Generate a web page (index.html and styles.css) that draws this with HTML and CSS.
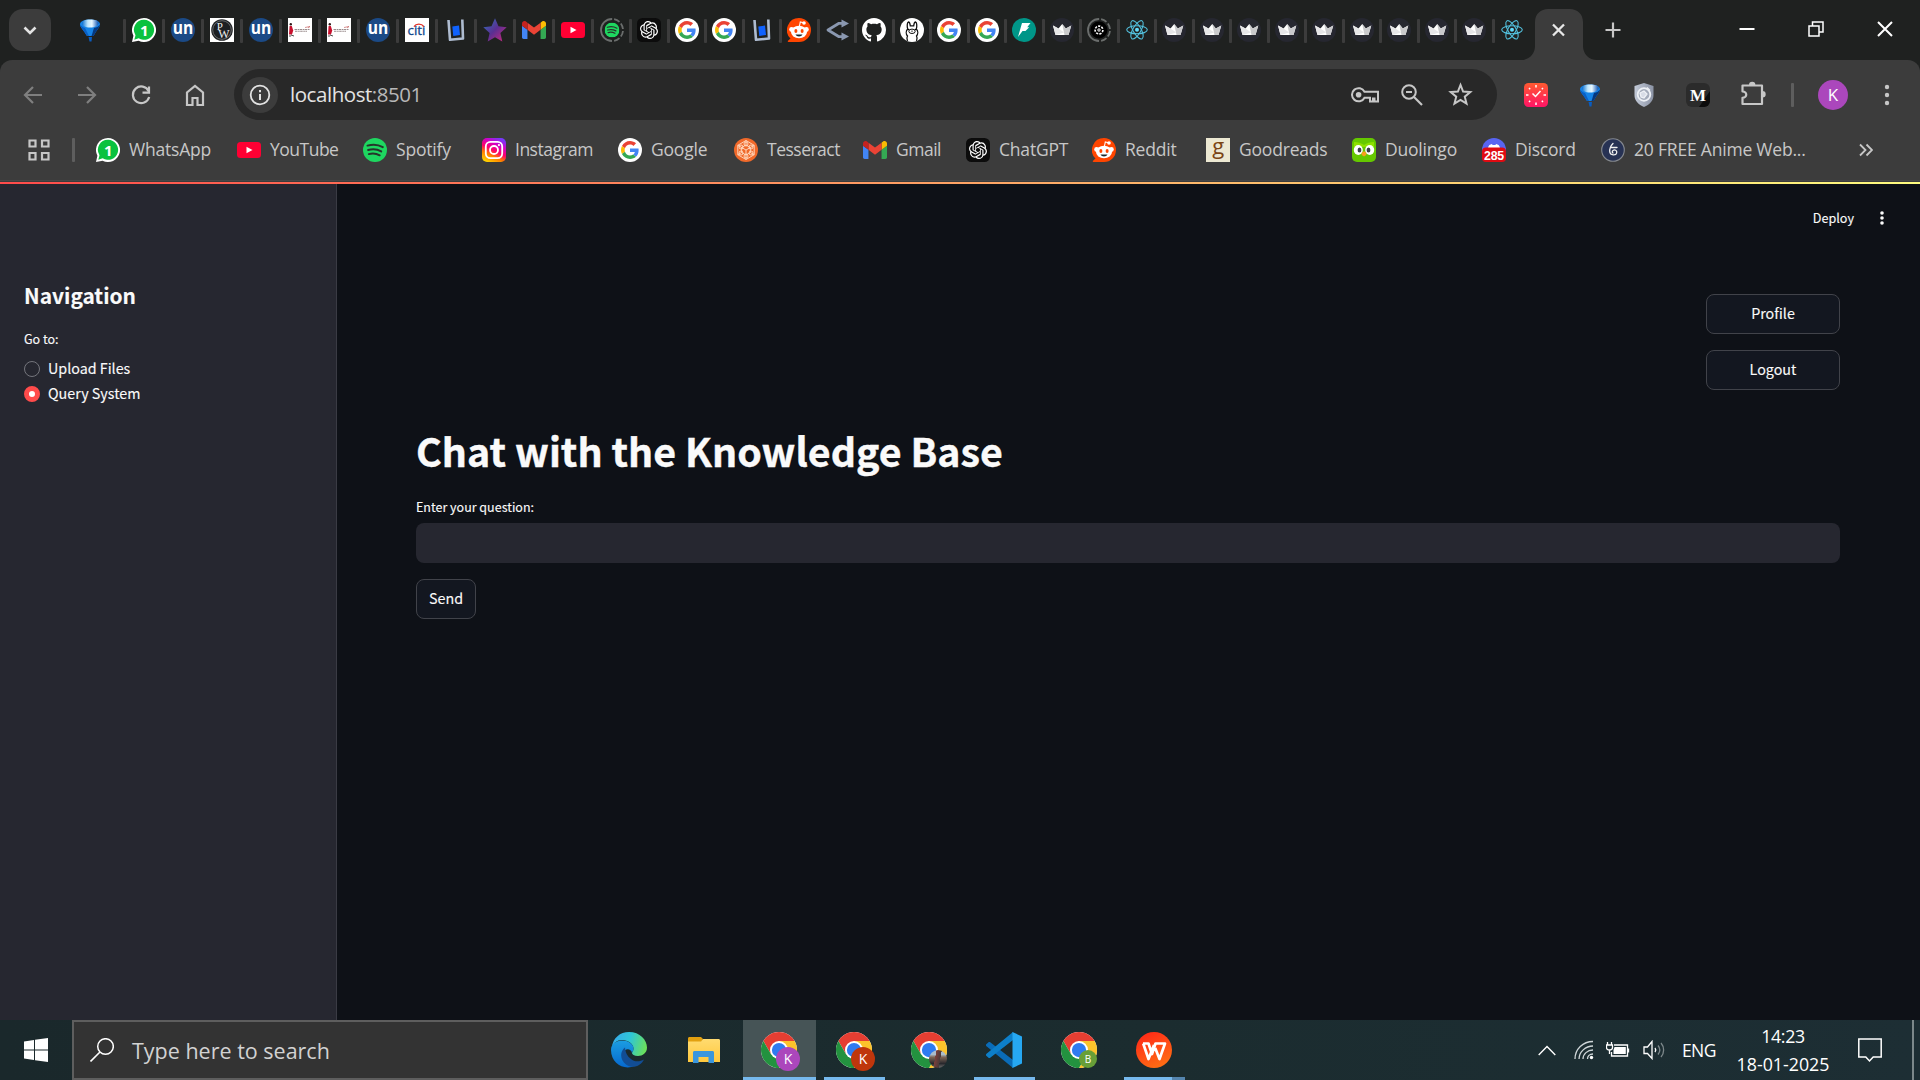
FILE: index.html
```html
<!DOCTYPE html>
<html lang="en">
<head>
<meta charset="utf-8">
<title>Chat with the Knowledge Base</title>
<link rel="stylesheet" href="styles.css">
</head>
<body>
<svg class="gradients" aria-hidden="true">
  <defs>
    <linearGradient id="gBalloon" x1="0" x2="1"><stop offset="0" stop-color="#0d6fd0"/><stop offset=".35" stop-color="#bfe6fb"/><stop offset=".6" stop-color="#e8f7ff"/><stop offset="1" stop-color="#0a50b0"/></linearGradient>
    <linearGradient id="gStar" x1="0" y1="0" x2="1" y2="1"><stop offset=".15" stop-color="#3b5fb0"/><stop offset=".5" stop-color="#5a2f92"/><stop offset="1" stop-color="#d0287c"/></linearGradient>
    <linearGradient id="gInsta" x1=".2" y1="1" x2=".7" y2="0"><stop offset="0" stop-color="#ffd600"/><stop offset=".3" stop-color="#ff7a00"/><stop offset=".5" stop-color="#ff0169"/><stop offset=".75" stop-color="#d300c5"/><stop offset="1" stop-color="#7638fa"/></linearGradient>
    <linearGradient id="gClock" x1="0" y1="0" x2="0" y2="1"><stop offset="0" stop-color="#ff5a30"/><stop offset="1" stop-color="#ff1466"/></linearGradient>
    <linearGradient id="gShield" x1="0" x2="1"><stop offset="0" stop-color="#c3cad8"/><stop offset="1" stop-color="#8b93a5"/></linearGradient>
    <linearGradient id="gEdgeTop" x1="0" y1=".3" x2="1" y2=".5"><stop offset="0" stop-color="#35a9ea"/><stop offset=".5" stop-color="#2fc6d6"/><stop offset="1" stop-color="#6be05a"/></linearGradient>
    <linearGradient id="gEdgeMid" x1="0" y1="0" x2="0" y2="1"><stop offset="0" stop-color="#1b9de2"/><stop offset="1" stop-color="#0669cf"/></linearGradient>
    <linearGradient id="gWps" x1="0" y1="0" x2=".5" y2="1"><stop offset="0" stop-color="#ff2218"/><stop offset="1" stop-color="#ff6a14"/></linearGradient>
    <linearGradient id="gFolder" x1="0" y1="0" x2="0" y2="1"><stop offset="0" stop-color="#ffdb70"/><stop offset="1" stop-color="#ffc83d"/></linearGradient>
  </defs>
</svg>
<svg class="symbols" aria-hidden="true">
  <symbol id="balloon" viewBox="0 0 24 24"><path d="M12 1.500C6.500 1.500 2 3.200 2 6.500c0 2.500 3.500 5.500 7 11.500h6.500C18.500 12 22 9 22 6.500c0-3.300-4.500-5-10-5z" fill="#1583e6"/><path d="M12 1.500C7 1.500 4 3 4 5.500c0 2 3 4 8 4s8.500-2 8.500-4.500-3.500-3.500-8.500-3.500z" fill="url(#gBalloon)"/><path d="M2 6.500c1.500 2 3 3 5 3.500 1.500 3 2.500 5 4 8H9C5.500 12 2 9 2 6.500z" fill="#0a5fc4"/><path d="M22 6.500c-1.500 2-3.500 3.200-6 3.500-1 3-1.500 5-2.500 8h2C18.500 12 22 9 22 6.500z" fill="#06387f"/><path d="M10.500 19h3.500l-.5 4.500h-2z" fill="#0a5cc0"/></symbol>
  <symbol id="whatsapp" viewBox="0 0 24 24"><path d="M12 0a12 12 0 1 1-5.400 22.700L0 24l1.400-6.300A12 12 0 0 1 12 0z" fill="#fff"/><path d="M12.300 1.800a10 10 0 1 1-5.600 18.400l-4.400 1.600 1.200-4.600A10 10 0 0 1 12.300 1.800z" fill="#0ac23f"/><text x="12.300" y="17.500" class="glyph bold" font-size="15" fill="#fff">1</text></symbol>
  <symbol id="un" viewBox="0 0 24 24"><circle cx="12" cy="12" r="12" fill="#1b4a86"/><text x="12" y="16" class="glyph bold" font-size="17" textLength="20.500" lengthAdjust="spacingAndGlyphs" fill="#fff">un</text></symbol>
  <symbol id="pw" viewBox="0 0 24 24"><path fill="#fff" d="M0 0h24v24H0z"/><circle cx="12" cy="12" r="10.800" fill="#1c1f22"/><circle cx="12" cy="12" r="9.300" fill="none" stroke="#999" stroke-width=".6"/><text x="9.800" y="11.500" class="serif" font-size="11" fill="#eee">P</text><text x="14" y="20" class="serif" font-size="12" fill="#eee">W</text></symbol>
  <symbol id="book-lady" viewBox="0 0 24 24"><path fill="#fff" d="M0 0h24v24H0z"/><circle cx="2.800" cy="6.200" r="1.200" fill="#301818"/><path d="M1.600 8h2.200l1.400 4.500-1.200 4H1z" fill="#c8102e"/><path d="M3 17l3 1M2 17v2" stroke="#222" stroke-width=".8"/><path d="M6.500 11.500h15M7 13.300h12" stroke="#9a8c8d" stroke-width="1.100" stroke-dasharray="2.500 .6 1.600 .5"/><path d="M17 9.500l5-1-2 1.500" stroke="#b44" fill="none" stroke-width=".6"/></symbol>
  <symbol id="citi" viewBox="0 0 24 24"><path fill="#fff" d="M0 0h24v24H0z"/><text x="11.500" y="16.500" class="glyph" font-size="13" textLength="18" lengthAdjust="spacingAndGlyphs" fill="#12488c" stroke="#12488c" stroke-width=".3">citi</text><path d="M9 8.600c2-3.200 7.500-3.200 10 0" fill="none" stroke="#e0342c" stroke-width="1.300"/></symbol>
  <symbol id="ubook" viewBox="0 0 24 24"><path d="M4.500 2L6 21.800 19 20.500 18.300 1.500" fill="none" stroke="#aebcd0" stroke-width="2.600" stroke-linejoin="round"/><path d="M8.300 8.500l6.700-1 1 9.500-6.700 1z" fill="#0f62fe"/></symbol>
  <symbol id="star-fav" viewBox="0 0 24 24"><path d="M12 .3l3.500 8 8.200 1-6.300 5.600 1.900 8.600-7.300-4.300-7.300 4.300 1.900-8.600L.3 9.300l8.200-1z" fill="url(#gStar)"/></symbol>
  <symbol id="gmail" viewBox="52 38 88 74"><path fill="#4285f4" d="M58 108h14V74L52 59v43c0 3.320 2.690 6 6 6"/><path fill="#34a853" d="M120 108h14c3.320 0 6-2.690 6-6V59l-20 15"/><path fill="#fbbc04" d="M120 48v26l20-15v-8c0-7.420-8.470-11.650-14.400-7.200"/><path fill="#ea4335" d="M72 74V48l24 18 24-18v26L96 92"/><path fill="#c5221f" d="M52 51v8l20 15V48l-5.600-4.200c-5.940-4.450-14.400-.22-14.400 7.200"/></symbol>
  <symbol id="youtube" viewBox="0 0 24 24"><rect y="4" width="24" height="16" rx="3.500" fill="#ff0033"/><path d="M9.500 8.700v6.600l6-3.300z" fill="#fff"/></symbol>
  <symbol id="spot" viewBox="0 0 24 24"><circle cx="12" cy="12" r="12" fill="#1ed760"/><path d="M4.500 7.600c5-1.500 11-1 15.300 1.500M5.100 12c4.600-1.300 9.300-.8 13.100 1.400M5.800 16.100c3.900-1 7.600-.6 10.900 1.200" fill="none" stroke="#26352b" stroke-width="2" stroke-linecap="round"/></symbol>
  <symbol id="spot-sleep" viewBox="0 0 24 24"><circle cx="12" cy="12" r="11" fill="none" stroke="#6b6e6d" stroke-width="1.800" stroke-dasharray="34.500 2 6 2 6 2 6 2 6 2.500" transform="rotate(90 12 12)"/><svg x="4.500" y="4.500" width="15" height="15"><use href="#spot"/></svg></symbol>
  <symbol id="gpt-mark" viewBox="0 0 24 24"><path d="M22.282 9.821a5.985 5.985 0 0 0-.516-4.910 6.046 6.046 0 0 0-6.510-2.900A6.065 6.065 0 0 0 4.981 4.182a5.985 5.985 0 0 0-3.998 2.900 6.046 6.046 0 0 0 .743 7.097 5.980 5.980 0 0 0 .511 4.911 6.051 6.051 0 0 0 6.515 2.900A5.985 5.985 0 0 0 13.260 24a6.056 6.056 0 0 0 5.772-4.206 5.989 5.989 0 0 0 3.998-2.900 6.056 6.056 0 0 0-.748-7.073zm-9.022 12.608a4.476 4.476 0 0 1-2.876-1.041l.142-.080 4.778-2.758a.795.795 0 0 0 .393-.681v-6.737l2.020 1.169a.071.071 0 0 1 .038.052v5.583a4.504 4.504 0 0 1-4.495 4.494zm-9.661-4.125a4.471 4.471 0 0 1-.535-3.014l.142.085 4.783 2.758a.771.771 0 0 0 .781 0l5.843-3.369v2.332a.080.080 0 0 1-.033.062L9.740 19.950a4.499 4.499 0 0 1-6.141-1.646zM2.341 7.896a4.485 4.485 0 0 1 2.366-1.973V11.600a.766.766 0 0 0 .388.677l5.814 3.354-2.020 1.169a.076.076 0 0 1-.071 0l-4.830-2.787A4.504 4.504 0 0 1 2.341 7.872zm16.596 3.856L13.104 8.364 15.119 7.200a.076.076 0 0 1 .071 0l4.830 2.791a4.494 4.494 0 0 1-.677 8.104v-5.677a.790.790 0 0 0-.407-.667zm2.011-3.023l-.142-.085-4.774-2.782a.776.776 0 0 0-.785 0L9.409 9.230V6.897a.066.066 0 0 1 .028-.062l4.830-2.787a4.499 4.499 0 0 1 6.680 4.660zM8.307 12.863l-2.020-1.164a.080.080 0 0 1-.038-.057V6.074a4.499 4.499 0 0 1 7.376-3.454l-.142.081L8.704 5.459a.795.795 0 0 0-.393.681zm1.098-2.365l2.602-1.500 2.607 1.500v2.999l-2.597 1.500-2.607-1.500z" fill="#fff"/></symbol>
  <symbol id="gpt" viewBox="0 0 24 24"><rect width="24" height="24" rx="5.500" fill="#0c0c0c"/><svg x="3" y="3" width="18" height="18"><use href="#gpt-mark"/></svg></symbol>
  <symbol id="gpt-sleep" viewBox="0 0 24 24"><circle cx="12" cy="12" r="11" fill="none" stroke="#6b6e6d" stroke-width="1.800" stroke-dasharray="34.500 2 6 2 6 2 6 2 6 2.500" transform="rotate(90 12 12)"/><circle cx="12" cy="12" r="8.500" fill="#000"/><circle cx="12" cy="12" r="3.900" fill="none" stroke="#fff" stroke-width="1.600" stroke-dasharray="2.200 1.200"/><circle cx="12" cy="12" r="1.200" fill="none" stroke="#fff" stroke-width="1"/></symbol>
  <symbol id="google" viewBox="0 0 24 24"><circle cx="12" cy="12" r="12" fill="#fff"/><svg x="3" y="3" width="18" height="18" viewBox="0 0 48 48"><path fill="#ea4335" d="M24 9.500c3.540 0 6.710 1.220 9.210 3.600l6.850-6.850C35.900 2.380 30.470 0 24 0 14.620 0 6.510 5.380 2.560 13.220l7.980 6.190C12.430 13.720 17.740 9.500 24 9.500z"/><path fill="#4285f4" d="M46.980 24.550c0-1.570-.15-3.090-.38-4.550H24v9.020h12.940c-.58 2.960-2.260 5.480-4.780 7.180l7.730 6c4.510-4.180 7.090-10.360 7.090-17.650z"/><path fill="#fbbc05" d="M10.530 28.590c-.48-1.450-.76-2.990-.76-4.590s.27-3.140.76-4.590l-7.980-6.190C.92 16.460 0 20.120 0 24c0 3.880.92 7.540 2.560 10.780l7.970-6.190z"/><path fill="#34a853" d="M24 48c6.480 0 11.930-2.130 15.890-5.810l-7.730-6c-2.150 1.450-4.920 2.300-8.160 2.300-6.260 0-11.570-4.220-13.470-9.910l-7.980 6.190C6.510 42.620 14.620 48 24 48z"/></svg></symbol>
  <symbol id="reddit" viewBox="0 0 24 24"><path d="M12 0a12 12 0 1 1 0 24H1.500c-.8 0-1-.8-.5-1.300l2.500-2.200A12 12 0 0 1 12 0z" fill="#ff4500"/><path d="M12.500 8l.8-4 3.200.8" fill="none" stroke="#fff" stroke-width="1.100"/><circle cx="17" cy="5" r="1.800" fill="#fff"/><circle cx="4.600" cy="11.500" r="2.400" fill="#fff"/><circle cx="19.400" cy="11.500" r="2.400" fill="#fff"/><ellipse cx="12" cy="14" rx="8" ry="6.200" fill="#fff"/><ellipse cx="8.900" cy="13" rx="1.500" ry="1.900" fill="#ff4500"/><ellipse cx="15.100" cy="13" rx="1.500" ry="1.900" fill="#ff4500"/><path d="M8.500 16.500h7c-1 2.600-6 2.600-7 0z" fill="#1c2a30"/></symbol>
  <symbol id="fork" viewBox="0 0 24 24"><path d="M18 5.300h-4L3 12l11 6.700h4" fill="none" stroke="#8a98b0" stroke-width="2.800" stroke-linejoin="round"/><path d="M16.500 1.500L24 5.500l-7.500 4zM16.500 14.500l7.500 4-7.500 4z" fill="#8a98b0"/></symbol>
  <symbol id="github" viewBox="0 0 16 16"><path fill="#fff" d="M8 0C3.580 0 0 3.580 0 8c0 3.540 2.290 6.530 5.470 7.590.4.070.55-.17.55-.38 0-.19-.01-.82-.01-1.490-2.010.37-2.530-.49-2.690-.94-.09-.23-.48-.94-.82-1.130-.28-.15-.68-.52-.01-.53.63-.01 1.080.58 1.230.82.72 1.210 1.870.87 2.330.66.070-.52.28-.87.51-1.070-1.780-.2-3.640-.89-3.640-3.950 0-.87.31-1.590.82-2.150-.08-.2-.36-1.020.08-2.120 0 0 .67-.21 2.200.82.64-.18 1.320-.27 2-.27s1.360.09 2 .27c1.530-1.040 2.200-.82 2.200-.82.44 1.100.16 1.920.08 2.120.51.56.82 1.270.82 2.150 0 3.070-1.870 3.750-3.650 3.950.29.25.54.73.54 1.480 0 1.070-.01 1.930-.01 2.200 0 .21.15.46.55.38A8.010 8.010 0 0 0 16 8c0-4.420-3.580-8-8-8z"/></symbol>
  <symbol id="llama" viewBox="0 0 24 24"><circle cx="12" cy="12" r="12" fill="#fff"/><path d="M7.500 23c-1-2-.9-3.500 0-5-1.700-2-1.700-5 .2-7-.8-2.500-.6-6.500.6-7 1.300 0 1.800 2 2 3.800h3.400c.2-1.800.7-3.800 2-3.800 1.200.5 1.400 4.500.6 7 1.900 2 1.900 5 .2 7 .9 1.500 1 3 0 5" fill="none" stroke="#111" stroke-width="1.300"/><ellipse cx="12" cy="13.300" rx="3.200" ry="2.200" fill="none" stroke="#111"/><circle cx="8.600" cy="11.500" r=".8"/><circle cx="15.400" cy="11.500" r=".8"/><path d="M11 12.800l1 .7 1-.7" fill="none" stroke="#111" stroke-width=".7"/></symbol>
  <symbol id="bolt" viewBox="0 0 24 24"><circle cx="12" cy="12" r="12" fill="#009688"/><path d="M10 5h8.500l-3.300 4.300h2L13.500 13h-3L6 19z" fill="#fff"/></symbol>
  <symbol id="crown" viewBox="0 0 24 24"><circle cx="12" cy="12" r="12" fill="#262730"/><path d="M3 7.500l5.500 3L12.200 6l3.600 4.500 5.500-3L18.500 17h-13z" fill="#fff"/><path d="M12.200 6l3.600 4.500 5.500-3L18.500 17h-4z" fill="#c9c9cc"/><path d="M3 7.500l5.500 3 5.700 4L5.500 17z" fill="#e6e6e8"/></symbol>
  <symbol id="react" viewBox="0 0 24 24"><g fill="none" stroke="#53c1de" stroke-width="1.100"><ellipse cx="12" cy="11.800" rx="10.300" ry="4"/><ellipse cx="12" cy="11.800" rx="10.300" ry="4" transform="rotate(60 12 11.800)"/><ellipse cx="12" cy="11.800" rx="10.300" ry="4" transform="rotate(120 12 11.800)"/></g><circle cx="12" cy="11.800" r="2" fill="#61dafb"/></symbol>
  <symbol id="insta" viewBox="0 0 24 24"><rect width="24" height="24" rx="5" fill="url(#gInsta)"/><rect x="3.800" y="3.800" width="16.400" height="16.400" rx="4.600" fill="none" stroke="#fff" stroke-width="1.800"/><circle cx="12" cy="12" r="4" fill="none" stroke="#fff" stroke-width="1.800"/><circle cx="16.900" cy="7.100" r="1.100" fill="#fff"/></symbol>
  <symbol id="tess" viewBox="0 0 24 24"><circle cx="12" cy="12" r="12" fill="#f0692a"/><g fill="none" stroke="#ffe0c8" stroke-width=".9"><path d="M12 2.500l8.200 4.800v9.400L12 21.500l-8.200-4.800V7.300z"/><path d="M12 7l4.300 2.500v5L12 17l-4.300-2.500v-5z"/><path d="M12 2.500V7M20.200 7.300l-3.900 2.200M20.200 16.700l-3.900-2.200M12 21.500V17M3.800 16.700l3.900-2.200M3.800 7.300l3.900 2.200M7.700 9.500L12 12l4.300-2.500M12 12v5"/><circle cx="12" cy="6" r="2"/><circle cx="17" cy="9" r="2"/><circle cx="17" cy="15" r="2"/><circle cx="12" cy="18" r="2"/><circle cx="7" cy="15" r="2"/><circle cx="7" cy="9" r="2"/></g></symbol>
  <symbol id="goodreads" viewBox="0 0 24 24"><path fill="#ece8d2" d="M0 0h24v24H0z"/><text x="12" y="15.500" class="glyph" font-size="22" fill="#7a4415">g</text></symbol>
  <symbol id="duo" viewBox="0 0 24 24"><rect width="24" height="24" rx="5" fill="#65c800"/><path d="M2 4c4 0 7 1 10 3 3-2 6-3 10-3v5H2z" fill="#8ee000"/><ellipse cx="6.300" cy="12" rx="4.500" ry="5" fill="#fff"/><ellipse cx="17.700" cy="12" rx="4.500" ry="5" fill="#fff"/><ellipse cx="7.500" cy="12" rx="1.900" ry="2.600" fill="#3c4048"/><ellipse cx="16.500" cy="12" rx="1.900" ry="2.600" fill="#3c4048"/><path d="M9.700 14.500l2.300-1.200 2.300 1.200v2.400L12 18.500l-2.300-1.600z" fill="#f9a01b"/></symbol>
  <symbol id="discord" viewBox="0 0 24 24"><circle cx="12" cy="12" r="12" fill="#5865f2"/><path d="M6 10c.5-3 2-3.500 4-4l.5 1h3l.5-1c2 .5 3.500 1 4 4z" fill="#fff"/><rect y="9.500" width="24" height="14.500" rx="4" fill="#e00b12"/><text x="12" y="21.800" class="arial bold" font-size="12.500" textLength="20" lengthAdjust="spacingAndGlyphs" fill="#fff">285</text></symbol>
  <symbol id="anime" viewBox="0 0 24 24"><circle cx="12" cy="12" r="11.300" fill="#273254" stroke="#85898f" stroke-width="1.100"/><path d="M12 5.500c-2.500 2.500-3.500 6-3.200 8.500.4 3.500 6.200 3.800 6.900.8.500-2.400-2-3.600-3.700-2.300-1 .8-.9 2 0 2.500M9.500 9.500h6.500" fill="none" stroke="#f2f2f2" stroke-width="1.300" stroke-linecap="round"/></symbol>
  <symbol id="chrome" viewBox="0 0 48 48"><circle cx="24" cy="24" r="24" fill="#fff"/><path d="M24 12h20.780A24 24 0 0 0 3.220 12l10.390 18z" fill="#e53e32"/><path d="M34.390 30L24 48A24 24 0 0 0 44.780 12H24z" fill="#fcc32b"/><path d="M13.610 30L3.220 12A24 24 0 0 0 24 48l10.390-18z" fill="#23923f"/><circle cx="24" cy="24" r="12" fill="#fff"/><circle cx="24" cy="24" r="9.500" fill="#2f7bf0"/></symbol>
</svg>

<div class="browser">
  <header class="tabstrip">
    <button class="tab-search"><svg viewBox="0 0 42 42"><path d="M15.500 18.500l5.500 5.500 5.500-5.500" fill="none" stroke="#e3e3e3" stroke-width="2.600"/></svg></button>
    <div class="tab first"><svg><use href="#balloon"/></svg></div>
    <div class="tab"><svg><use href="#whatsapp"/></svg></div>
    <div class="tab"><svg><use href="#un"/></svg></div>
    <div class="tab"><svg><use href="#pw"/></svg></div>
    <div class="tab"><svg><use href="#un"/></svg></div>
    <div class="tab"><svg><use href="#book-lady"/></svg></div>
    <div class="tab"><svg><use href="#book-lady"/></svg></div>
    <div class="tab"><svg><use href="#un"/></svg></div>
    <div class="tab"><svg><use href="#citi"/></svg></div>
    <div class="tab"><svg><use href="#ubook"/></svg></div>
    <div class="tab"><svg><use href="#star-fav"/></svg></div>
    <div class="tab"><svg><use href="#gmail"/></svg></div>
    <div class="tab"><svg><use href="#youtube"/></svg></div>
    <div class="tab last-wide"><svg><use href="#spot-sleep"/></svg></div>
    <div class="tab narrow"><svg><use href="#gpt"/></svg></div>
    <div class="tab narrow"><svg><use href="#google"/></svg></div>
    <div class="tab narrow"><svg><use href="#google"/></svg></div>
    <div class="tab narrow"><svg><use href="#ubook"/></svg></div>
    <div class="tab narrow"><svg><use href="#reddit"/></svg></div>
    <div class="tab narrow"><svg><use href="#fork"/></svg></div>
    <div class="tab narrow"><svg><use href="#github"/></svg></div>
    <div class="tab narrow"><svg><use href="#llama"/></svg></div>
    <div class="tab narrow"><svg><use href="#google"/></svg></div>
    <div class="tab narrow"><svg><use href="#google"/></svg></div>
    <div class="tab narrow"><svg><use href="#bolt"/></svg></div>
    <div class="tab narrow"><svg><use href="#crown"/></svg></div>
    <div class="tab narrow"><svg><use href="#gpt-sleep"/></svg></div>
    <div class="tab narrow"><svg><use href="#react"/></svg></div>
    <div class="tab narrow"><svg><use href="#crown"/></svg></div>
    <div class="tab narrow"><svg><use href="#crown"/></svg></div>
    <div class="tab narrow"><svg><use href="#crown"/></svg></div>
    <div class="tab narrow"><svg><use href="#crown"/></svg></div>
    <div class="tab narrow"><svg><use href="#crown"/></svg></div>
    <div class="tab narrow"><svg><use href="#crown"/></svg></div>
    <div class="tab narrow"><svg><use href="#crown"/></svg></div>
    <div class="tab narrow"><svg><use href="#crown"/></svg></div>
    <div class="tab narrow"><svg><use href="#crown"/></svg></div>
    <div class="tab narrow"><svg><use href="#react"/></svg></div>
    <div class="tab-active"><svg viewBox="0 0 76 51"><path d="M0 51c8 0 14-6 14-14V13C14 5 20 0 27 0h22c7 0 13 5 13 13v24c0 8 6 14 14 14z" fill="#3c3c3c"/><path d="M32 15.500l11 11M43 15.500l-11 11" stroke="#e8e8e8" stroke-width="2.300"/></svg></div>
    <svg class="new-tab" viewBox="0 0 16 16"><path d="M8 .5v15M.5 8h15" stroke="#c7c7c7" stroke-width="2.200"/></svg>
    <div class="window-controls">
      <svg viewBox="0 0 16 16"><path d="M.5 8h15" stroke="#fff" stroke-width="2"/></svg>
      <svg viewBox="0 0 16 16"><path d="M1 5h10v10H1zM4.500 5V1H15v10h-4" fill="none" stroke="#fff" stroke-width="1.500"/></svg>
      <svg viewBox="0 0 16 16"><path d="M1 1l14 14M15 1L1 15" stroke="#fff" stroke-width="2"/></svg>
    </div>
  </header>

  <div class="chrome-panel">
  <nav class="toolbar">
    <div class="nav-buttons">
      <svg class="dim" viewBox="0 0 24 24"><path d="M21 12H4M12 4l-8 8 8 8"/></svg>
      <svg class="dim" viewBox="0 0 24 24"><path d="M3 12h17M12 4l8 8-8 8"/></svg>
      <svg viewBox="0 0 24 24"><path d="M19.700 8.200A8.300 8.300 0 1 0 20.200 14"/><path d="M20 3.500v6.200h-6.500"/></svg>
      <svg viewBox="0 0 24 24"><path d="M4 22V9.500l8-6.500 8 6.500V22h-5.500v-7h-5v7z"/></svg>
    </div>
    <div class="address">
      <span class="site-info"><svg viewBox="0 0 24 24"><circle cx="12" cy="12" r="9.300" fill="none" stroke="#e3e3e3" stroke-width="1.800"/><path d="M12 11v6M12 7v2.200" stroke="#e3e3e3" stroke-width="2"/></svg></span>
      <span class="url">localhost<span class="port">:8501</span></span>
      <svg class="key" viewBox="0 0 28 20"><path d="M13.500 6.800A6.600 6.600 0 1 0 13.500 12.700H19v3.800h3v-3h1.500v3H27V6.800z" fill="none" stroke="#c7c7c7" stroke-width="2"/><circle cx="7.600" cy="9.800" r="2.800" fill="#c7c7c7"/></svg>
      <svg class="zoom-out" viewBox="0 0 24 24"><circle cx="9" cy="9" r="6.800" fill="none" stroke="#c7c7c7" stroke-width="2"/><path d="M14 14l8 8" stroke="#c7c7c7" stroke-width="2.200"/><path d="M6 9h6" stroke="#c7c7c7" stroke-width="2"/></svg>
      <svg class="bookmark-star" viewBox="0 0 24 24"><path d="M12 2.800l2.500 6.400 6.900.5-5.300 4.400 1.700 6.700-5.800-3.700-5.800 3.700 1.700-6.700-5.300-4.400 6.900-.5z" fill="none" stroke="#c7c7c7" stroke-width="1.900"/></svg>
    </div>
    <div class="extensions">
      <svg viewBox="0 0 24 24"><rect width="24" height="24" rx="4.500" fill="url(#gClock)"/><path d="M8.500 10.500l3 3L16.500 8" fill="none" stroke="#fff" stroke-width="1.500"/><g stroke="#fff" stroke-width="1.500"><path d="M12 2v2.500M12 19.500V22M2 12h2.500M19.500 12H22"/><path d="M5 5l1.200 1.200M17.800 17.800L19 19M5 19l1.200-1.200M17.800 6.200L19 5"/></g></svg>
      <svg><use href="#balloon"/></svg>
      <svg viewBox="0 0 24 24"><path d="M12 0l9.500 3v9c0 6-4 9.500-9.500 12C6.500 21.500 2.500 18 2.500 12V3z" fill="url(#gShield)"/><circle cx="12" cy="11.500" r="6.300" fill="#a4acbb" stroke="#eef1f6" stroke-width="1.800"/><path d="M8 10l4-2 3 3-3 4-3-1zM15 4.500l3 3" fill="#d7dce6" stroke="#eef1f6" stroke-width="1.300"/></svg>
      <svg viewBox="0 0 24 24"><rect width="24" height="24" rx="6" fill="#2b2b2b"/><path d="M24 8v10a6 6 0 0 1-6 6h-5z" fill="#0c0c0c"/><text x="12" y="18" class="serif bold" font-size="17" fill="#fff">M</text></svg>
      <svg class="puzzle" viewBox="0 0 26 26"><path d="M2.500 5.500h19.500V24H2.500v-6.200c5 0 5-6.300 0-6.300z" fill="none" stroke="#c7c7c7" stroke-width="2.200" stroke-linejoin="round"/><path d="M9 5a3.200 3.200 0 0 1 6.400 0zM22.500 11a3.200 3.200 0 0 1 0 6.400z" fill="#c7c7c7"/></svg>
    </div>
    <span class="divider"></span>
    <span class="avatar">K</span>
    <svg class="menu-dots" viewBox="0 0 6 22"><g fill="#c7c7c7"><circle cx="3" cy="3" r="2.200"/><circle cx="3" cy="11" r="2.200"/><circle cx="3" cy="19" r="2.200"/></g></svg>
  </nav>

  <nav class="bookmarks">
    <svg class="apps" viewBox="0 0 22 22"><path d="M1.500 1.500h6v6h-6zM14 1.500h6.500v6H14zM1.500 14h6v6.500h-6zM14 14h6.500v6.500H14z" fill="none" stroke="#c7c7c7" stroke-width="2.200"/></svg>
    <span class="divider"></span>
    <div class="bookmark-list">
      <a><svg><use href="#whatsapp"/></svg><span>WhatsApp</span></a>
      <a><svg><use href="#youtube"/></svg><span class="tight">YouTube</span></a>
      <a><svg><use href="#spot"/></svg><span>Spotify</span></a>
      <a><svg><use href="#insta"/></svg><span class="tight">Instagram</span></a>
      <a><svg><use href="#google"/></svg><span>Google</span></a>
      <a><svg><use href="#tess"/></svg><span class="tight">Tesseract</span></a>
      <a><svg><use href="#gmail"/></svg><span class="tight">Gmail</span></a>
      <a><svg><use href="#gpt"/></svg><span>ChatGPT</span></a>
      <a><svg><use href="#reddit"/></svg><span>Reddit</span></a>
      <a><svg><use href="#goodreads"/></svg><span>Goodreads</span></a>
      <a><svg><use href="#duo"/></svg><span>Duolingo</span></a>
      <a><svg><use href="#discord"/></svg><span>Discord</span></a>
      <a><svg><use href="#anime"/></svg><span>20 FREE Anime Web...</span></a>
    </div>
    <svg class="more" viewBox="0 0 14 14"><path d="M1 1.500L6.500 7 1 12.500M7.500 1.500L13 7l-5.500 5.500" fill="none" stroke="#c7c7c7" stroke-width="1.800"/></svg>
  </nav>
  </div>
</div>

<div class="app-bar"></div>
<div class="app">
  <aside class="sidebar">
    <h2>Navigation</h2>
    <p class="label">Go to:</p>
    <label class="radio"><i></i><span>Upload Files</span></label>
    <label class="radio checked"><i></i><span>Query System</span></label>
  </aside>
  <main>
    <div class="app-header"><span>Deploy</span><svg viewBox="0 0 4 14"><g fill="#fafafa"><circle cx="2" cy="2" r="1.800"/><circle cx="2" cy="7" r="1.800"/><circle cx="2" cy="12" r="1.800"/></g></svg></div>
    <div class="content">
      <div class="account">
        <button class="btn">Profile</button>
        <button class="btn">Logout</button>
      </div>
      <h1>Chat with the Knowledge Base</h1>
      <p class="label">Enter your question:</p>
      <div class="field"></div>
      <button class="btn send">Send</button>
    </div>
  </main>
</div>

<footer class="taskbar">
  <div class="start"><svg viewBox="0 0 24 24"><path d="M0 3.500L10 2v9.400H0zM11 1.800L24 0v11.400H11zM0 12.500h10V22L0 20.500zM11 12.500h13V24L11 22.200z" fill="#fff"/></svg></div>
  <div class="search"><svg viewBox="0 0 24 24"><circle cx="15.500" cy="8.500" r="7.800" fill="none" stroke="#fff" stroke-width="1.500"/><path d="M10 14L.5 23.500" stroke="#fff" stroke-width="1.600"/></svg><span>Type here to search</span></div>
  <div class="tasks">
    <div class="task"><svg viewBox="0 0 36 36"><path d="M1 15C2 6 9 0 18 0c11 0 18 8 18 15.500C36 21 31.500 24 27 24c-4 0-6-1.500-6-3 0-1 1.500-1.500 1.500-4.500C22.500 12 17 8 11 8 6 8 2.500 11 1 15z" fill="url(#gEdgeTop)"/><path d="M0 18C0 12 5 8.500 11 8.500c6 0 11.500 3.500 11.500 8 0 3-1.500 3.500-1.500 4.500-1-5-8-5-9 1-.8 6 5 12 12 11.500C14 39 0 32 0 18z" fill="url(#gEdgeMid)"/><path d="M14 15.500c-5.500 4-5 12.500 1 17 6.500 5 15 1.500 18-5-4 2.500-10 2.500-13-.5-4-3-5.500-6.500-6-11.500z" fill="#124d94"/></svg></div>
    <div class="task"><svg viewBox="0 0 36 36"><path d="M2 6.500C2 5.600 2.600 5 3.500 5H15l2 2-2 4H2z" fill="#e2a010"/><path d="M2 9.500h13l2-2.500h15.500c1 0 1.500.6 1.500 1.500V30H2z" fill="url(#gFolder)"/><path d="M7 31V20.500C7 19.600 7.600 19 8.500 19h18c.9 0 1.500.6 1.500 1.500V31h-5.500v-6h-10v6z" fill="#3a96dd"/></svg></div>
    <div class="task current"><svg><use href="#chrome"/></svg><b class="badge purple">K</b></div>
    <div class="task open"><svg><use href="#chrome"/></svg><b class="badge rust">K</b></div>
    <div class="task"><svg><use href="#chrome"/></svg><b class="badge small photo"></b></div>
    <div class="task open"><svg viewBox="0 0 36 36"><path d="M0 12.500l2.500-2.200c.5-.4 1.200-.4 1.700 0L27 28v8L.5 14.300c-.6-.5-.6-1.300-.5-1.800z" fill="#0a6cb8"/><path d="M0 23.500l2.500 2.200c.5.400 1.200.4 1.700 0L27 8V0L.5 21.700c-.6.500-.6 1.300-.5 1.800z" fill="#0d7fc9"/><path d="M26.500 0L36 4.500v27L26.500 36z" fill="#26a8f2"/></svg></div>
    <div class="task"><svg><use href="#chrome"/></svg><b class="badge small green">B</b></div>
    <div class="task open grouped"><svg viewBox="0 0 36 36"><circle cx="18" cy="18" r="18" fill="url(#gWps)"/><path d="M7 11.500h5.500L16 22l3.500-10.500h9.500L23.500 27l-4.300-11M7.200 11.500L12.500 27 18 13" fill="none" stroke="#fff" stroke-width="2.700" stroke-linejoin="round"/></svg></div>
  </div>
  <div class="tray">
    <svg class="t-chev" viewBox="0 0 18 11"><path d="M.7 10L9 1.500l8.300 8.500" fill="none" stroke="#fff" stroke-width="1.400"/></svg>
    <svg class="t-wifi" viewBox="0 0 20 20"><g fill="none" stroke="#cfd6d8" stroke-width="1.300"><path d="M1 19C1 9 9 1.500 19 1.500"/><path d="M5 19c0-7 6.500-13 14-13"/><path d="M9 19c0-5 4.500-9 10-9"/><path d="M13.500 19c0-2.500 2-5 5.500-5"/></g><circle cx="17.500" cy="17.500" r="1.700" fill="#fff"/></svg>
    <svg class="t-batt" viewBox="0 0 24 18"><path d="M8 4h13.500v11H5.500v-4" fill="none" stroke="#fff" stroke-width="1.300"/><path d="M8.500 6h11.300v7H7.500v-4z" fill="#fff"/><path d="M22.500 7.500v4M1.500 1v3M5.500 1v3M.5 4h6v2.500C6.500 8 5.500 9 3.500 9S.5 8 .5 6.500zM3.500 9v4" fill="none" stroke="#fff" stroke-width="1.300"/></svg>
    <svg class="t-vol" viewBox="0 0 23 20"><path d="M1 7h3.500L9 1.500v17L4.500 13.500H1z" fill="none" stroke="#fff" stroke-width="1.300"/><path d="M12 8c1 1.300 1 2.700 0 4" fill="none" stroke="#fff" stroke-width="1.300"/><path d="M15 5.500c2.200 2.700 2.200 6.300 0 9M18 3c3.500 4 3.500 10 0 14" fill="none" stroke="#7d888b" stroke-width="1.300"/></svg>
    <span class="lang">ENG</span>
    <div class="clock"><span>14:23</span><span>18-01-2025</span></div>
    <svg class="t-note" viewBox="0 0 24 25"><path d="M.8 1h22.400v18h-8l-3.700 4-3.700-4h-7z" fill="none" stroke="#fff" stroke-width="1.500"/></svg>
    <i class="peek"></i>
  </div>
</footer>
</body>
</html>
```

FILE: styles.css
```css
* { box-sizing: border-box; }
body {
  margin: 0;
  width: 1920px;
  height: 1080px;
  overflow: hidden;
  display: flex;
  flex-direction: column;
  background: #0e1117;
  font-family: "Open Sans", "Noto Sans", sans-serif;
}
button { font: inherit; padding: 0; }
svg { display: block; flex: none; }
.gradients { width: 0; height: 0; }
.symbols { display: none; }
.glyph { font-family: "Open Sans", sans-serif; text-anchor: middle; }
.arial { font-family: "Liberation Sans", sans-serif; text-anchor: middle; }
.serif { font-family: "Liberation Serif", serif; text-anchor: middle; }
.bold { font-weight: 700; }

/* Browser tab strip */
.browser { height: 182px; flex: none; background: #1f2120; }
.tabstrip { height: 60px; display: flex; align-items: flex-start; padding-left: 9px; }
.tab-search { width: 42px; height: 42px; margin-top: 9px; border: 0; border-radius: 14px; background: #3c3c3c; }
.tab { width: 39px; padding: 18px 0 0 6px; display: flex; flex: none; }
.tab::before { content: ""; width: 3px; height: 24px; margin: 1px 6px 0 -6px; border-radius: 1px; background: #3c3c3c; }
.tab svg { width: 24px; height: 24px; }
.tab.first { width: 72px; padding-left: 27px; }
.tab.first::before { display: none; }
.tab.last-wide { width: 38px; }
.tab.narrow { width: 37.5px; }
.tab.narrow::before { margin-right: 5px; }
.tab-active { width: 76px; margin: 9px 0 0 -8px; flex: none; }
.tab-active svg { width: 76px; height: 51px; }
.new-tab { width: 16px; height: 16px; margin: 22px 0 0 8px; }
.window-controls { display: flex; gap: 53px; margin: 21px 27px 0 auto; }
.window-controls svg { width: 16px; height: 16px; }

/* Toolbar */
.chrome-panel { height: 122px; background: #3c3c3c; border-radius: 12px 12px 0 0; border-bottom: 1px solid #3c3c3c; box-shadow: inset 0 -1px #474747; }
.toolbar { height: 69px; padding: 9px 30px 9px 21px; display: flex; align-items: center; }
.nav-buttons { display: flex; gap: 30px; width: 213px; }
.nav-buttons svg { width: 24px; height: 24px; fill: none; stroke: #c7c7c7; stroke-width: 2.2; }
.nav-buttons .dim { stroke: #7f7f7f; }
.address { width: 1263px; height: 51px; border-radius: 26px; background: #282828; display: flex; align-items: center; padding: 0 24px 0 8px; }
.site-info { width: 36px; height: 36px; border-radius: 50%; background: #3c3c3c; display: grid; place-items: center; }
.site-info svg { width: 24px; height: 24px; }
.url { margin: 0 auto 0 12px; padding-bottom: 2px; font-size: 20.500px; letter-spacing: -0.45px; color: #e3e3e3; }
.port { color: #b8b8b8; }
.key { width: 28px; height: 20px; margin-right: 21px; }
.zoom-out { width: 24px; height: 24px; margin-right: 24px; }
.bookmark-star { width: 25px; height: 25px; }
.extensions { display: flex; align-items: center; gap: 30px; margin-left: 27px; }
.extensions svg { width: 24px; height: 24px; }
.extensions .puzzle { width: 26px; height: 26px; margin-top: -3px; }
.divider { width: 3px; height: 24px; border-radius: 1px; background: #5e5e5e; flex: none; }
.toolbar .divider { margin: 0 24px 0 25px; }
.avatar { width: 30px; height: 30px; border-radius: 50%; background: #ab47bc; color: #fff; font: 17px/30px "Open Sans", sans-serif; text-align: center; }
.menu-dots { width: 6px; height: 22px; margin-left: auto; }

/* Bookmarks */
.bookmarks { height: 42px; padding: 0 47px 0 28px; display: flex; align-items: center; }
.apps { width: 22px; height: 22px; }
.bookmarks .divider { margin: 0 21px 0 22px; }
.bookmark-list { display: grid; grid-template-columns: 141px 126px 119px 136px 116px 129px 103px 126px 114px 146px 130px 119px 230px; }
.bookmark-list a { display: flex; align-items: center; gap: 9px; font-size: 17.500px; line-height: 22px; letter-spacing: -0.2px; color: #c7c7c7; white-space: nowrap; }
.bookmark-list span { padding-bottom: 2px; }
.bookmark-list .tight { letter-spacing: -0.5px; }
.bookmark-list svg { width: 24px; height: 24px; }
.more { width: 14px; height: 14px; margin-left: auto; }

/* Application */
.app-bar { height: 2px; flex: none; background: linear-gradient(90deg, #ff4b4b, #fffd80); }
.app { flex: 1; display: flex; color: #fafafa; font-family: "Noto Sans CJK JP", "Noto Sans", sans-serif; -webkit-text-stroke: 0.12px #fafafa; }
.app h1, .app h2, .app p { margin: 0; }
.sidebar { width: 337px; background: #262730; border-right: 1px solid #3a3b44; padding: 94px 24px 0; }
.sidebar h2 { font-size: 20.900px; line-height: 34px; font-weight: 700; }
.label { font-size: 12.500px; line-height: 20px; }
.sidebar .label { margin: 17px 0 7px; }
.radio { display: flex; align-items: center; gap: 8px; height: 25.500px; font-size: 14.300px; line-height: 22px; }
.radio span { padding-bottom: 2px; }
.radio i { width: 16px; height: 16px; border: 1px solid #74757c; border-radius: 50%; }
.radio.checked i { border: 5px solid #ff4b4b; background: #fff; }
main { flex: 1; background: #0e1117; }
.app-header { height: 68px; padding-right: 36px; display: flex; align-items: center; justify-content: flex-end; gap: 26px; font-size: 12.600px; }
.app-header span { padding-bottom: 2px; }
.app-header svg { width: 4px; height: 14px; }
.content { padding: 42px 80px 0 79px; display: flex; flex-direction: column; align-items: flex-start; }
.account { align-self: flex-end; width: 134px; display: grid; gap: 16px; }
.btn { height: 40px; padding-bottom: 2px; border: 1px solid #41434a; border-radius: 8px; background: #131720; color: #fafafa; font-size: 14.300px; line-height: 36px; }
.content h1 { margin-top: 30px; font-size: 39.350px; line-height: 60px; font-weight: 700; white-space: nowrap; -webkit-text-stroke-width: 0.4px; }
.content .label { margin-top: 17px; }
.field { width: 100%; height: 40px; margin: 6px 0 16px; border-radius: 8px; background: #262730; }
.send { width: 60px; }

/* Taskbar */
.taskbar { height: 60px; flex: none; display: flex; background: linear-gradient(90deg, #1a282b, #1b2c2f 60%, #1d2e34); color: #fff; }
.start { width: 72px; padding: 18px 24px; }
.start svg { width: 24px; height: 24px; }
.search { width: 516px; border: 2px solid #5e5e5e; background: #333; display: flex; align-items: center; padding-left: 16px; gap: 18px; font-size: 21.500px; color: #d2d2d2; }
.search svg { width: 24px; height: 24px; }
.search span { padding-top: 2px; line-height: 54px; letter-spacing: 0; }
.tasks { display: flex; gap: 2px; margin-left: 5px; }
.task { width: 73px; padding: 12px 2px 0 0; position: relative; display: flex; justify-content: center; align-items: flex-start; }
.task svg { width: 36px; height: 36px; }
.task.current { background: #465456; box-shadow: inset 0 -3px #76b9ed; }
.task.open { background: linear-gradient(#76b9ed, #76b9ed) center bottom / 61px 3px no-repeat; }
.task.grouped { background: linear-gradient(90deg, #76b9ed 48px, #5585ae 48px) center bottom / 61px 3px no-repeat; }
.badge { position: absolute; left: 33px; top: 27px; width: 24px; height: 24px; border-radius: 50%; font: 14px/24px "Open Sans", sans-serif; text-align: center; }
.badge.small { left: 36px; top: 30px; width: 18px; height: 18px; font-size: 10px; line-height: 18px; }
.purple { background: #ab47bc; }
.rust { background: #bf360c; }
.green { background: #689f38; }
.photo { background: linear-gradient(100deg, transparent 35%, #7a3f3a 36%, #4a3a3a 60%, transparent 61%), linear-gradient(#a9bccb 25%, #7d6555 40%, #29282d 75%, #70706f); }
.tray { margin-left: auto; display: flex; align-items: center; font-size: 17.500px; }
.t-chev { width: 18px; height: 11px; margin-right: 18px; }
.t-wifi { width: 20px; height: 20px; margin-right: 12px; }
.t-batt { width: 24px; height: 18px; margin-right: 13px; }
.t-vol { width: 23px; height: 20px; margin-right: 16px; }
.lang { width: 34px; letter-spacing: -0.6px; }
.clock { width: 134px; display: flex; flex-direction: column; align-items: center; line-height: 28px; font-size: 17.800px; letter-spacing: 0; }
.clock span:first-child { letter-spacing: -0.4px; }
.t-note { width: 24px; height: 25px; margin: 0 30px 0 8px; }
.peek { align-self: stretch; width: 8px; border-left: 2px solid #7c888b; }
```
